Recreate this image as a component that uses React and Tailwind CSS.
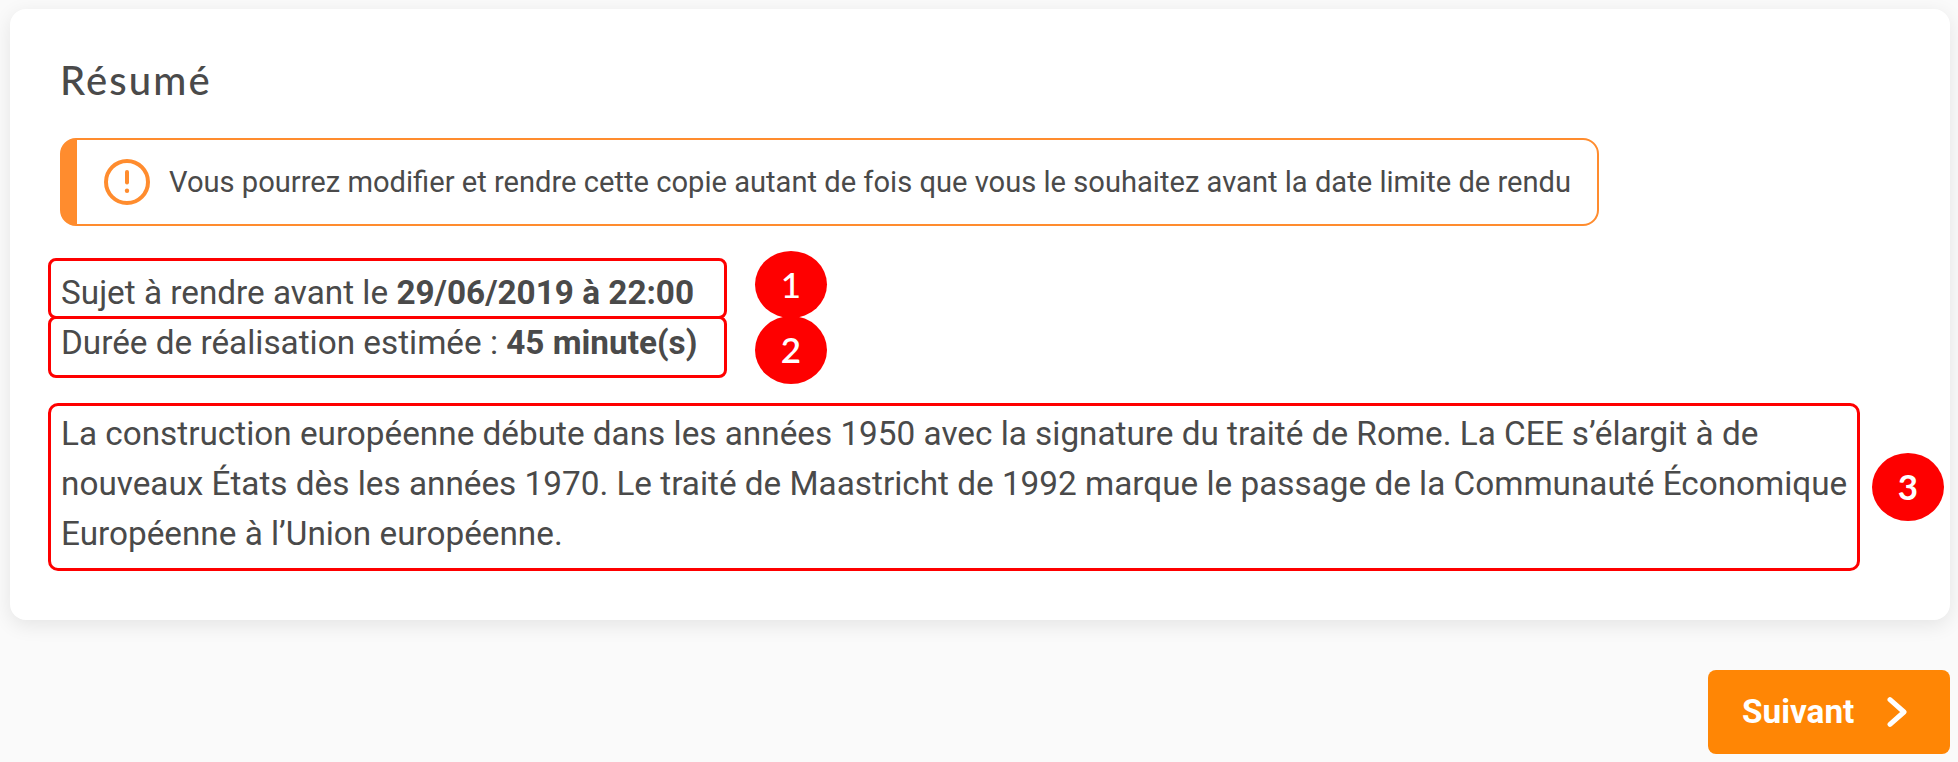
function Badge({ children, className }) {
  return (
    <span className={`absolute flex w-[72px] items-center justify-center rounded-[50%] bg-[#fe0000] pb-px font-[Lato,sans-serif] text-[35px] leading-none text-white ${className}`}>
      {children}
    </span>
  );
}

export default function App() {
  return (
    <div className="flex h-[762px] w-[1958px] flex-col overflow-hidden bg-[#fafafa] pt-[9px] pr-2 pl-[10px] font-[Roboto,sans-serif] text-[#4a4a4a]">
      <main className="flex h-[611px] flex-col items-start rounded-2xl bg-white pl-[38px] shadow-[0_5px_20px_rgba(0,0,0,0.09)]">
        <h1 className="mt-[47px] ml-[12px] h-[49px] font-[Lato,sans-serif] text-[40px] leading-[49px] font-medium tracking-[2.1px]">
          Résumé
        </h1>

        <div className="mt-[33px] ml-3 flex h-[88px] w-[1539px] items-center rounded-2xl border-2 border-l-[17px] border-[#ff8c2e] pl-[27px]">
          <svg className="size-[46px] shrink-0" viewBox="0 0 46 46" fill="none" stroke="#ff8c2e">
            <circle cx="23" cy="23" r="21" strokeWidth="4" />
            <path d="M23 13v10.5" strokeWidth="4" strokeLinecap="round" />
            <circle cx="23" cy="31.8" r="2.2" fill="#ff8c2e" stroke="none" />
          </svg>
          <span className="ml-[19px] pt-[2px] text-[29.13px] whitespace-nowrap">
            Vous pourrez modifier et rendre cette copie autant de fois que vous le souhaitez avant la date limite de rendu
          </span>
        </div>

        <section className="mt-8 text-[33.3px] leading-[50px] whitespace-nowrap">
          <div className="relative h-[61px] w-[679px] rounded-lg border-3 border-[#fe0000] pt-[7px] pl-[10px]">
            Sujet à rendre avant le <b>29/06/2019 à 22:00</b>
            <Badge className="top-[-10px] left-[704px] h-[67px] font-medium">1</Badge>
          </div>
          <div className="relative mt-[-3px] h-[62px] w-[679px] rounded-lg border-3 border-[#fe0000] pl-[10px]">
            <div className="-mt-px">
              Durée de réalisation estimée : <b>45 minute(s)</b>
            </div>
            <Badge className="top-[-3px] left-[704px] h-[68px] font-semibold">2</Badge>
          </div>
        </section>

        <section className="relative mt-[25px] h-[168px] w-[1812px] rounded-[10px] border-3 border-[#fe0000] pt-[3px] pl-[10px] text-[33.3px] leading-[50px] whitespace-nowrap">
          <p>
            La construction européenne débute dans les années 1950 avec la signature du traité de Rome. La CEE s’élargit à de
            <br />
            nouveaux États dès les années 1970. Le traité de Maastricht de 1992 marque le passage de la Communauté Économique
            <br />
            Européenne à l’Union européenne.
          </p>
          <Badge className="top-[47px] left-[1821px] h-[68px] font-bold">3</Badge>
        </section>
      </main>

      <button className="mt-[50px] flex h-[84px] w-[242px] items-center self-end rounded-lg bg-[#ff8605] pb-px pl-[34px] text-[33.3px] font-bold text-white">
        Suivant
        <svg className="ml-[33px] h-[30px] w-5" viewBox="0 0 20 30" fill="none" stroke="currentColor" strokeWidth="5" strokeLinecap="round" strokeLinejoin="round">
          <path d="M3 2.7 17 15 3 27.3" />
        </svg>
      </button>
    </div>
  );
}
